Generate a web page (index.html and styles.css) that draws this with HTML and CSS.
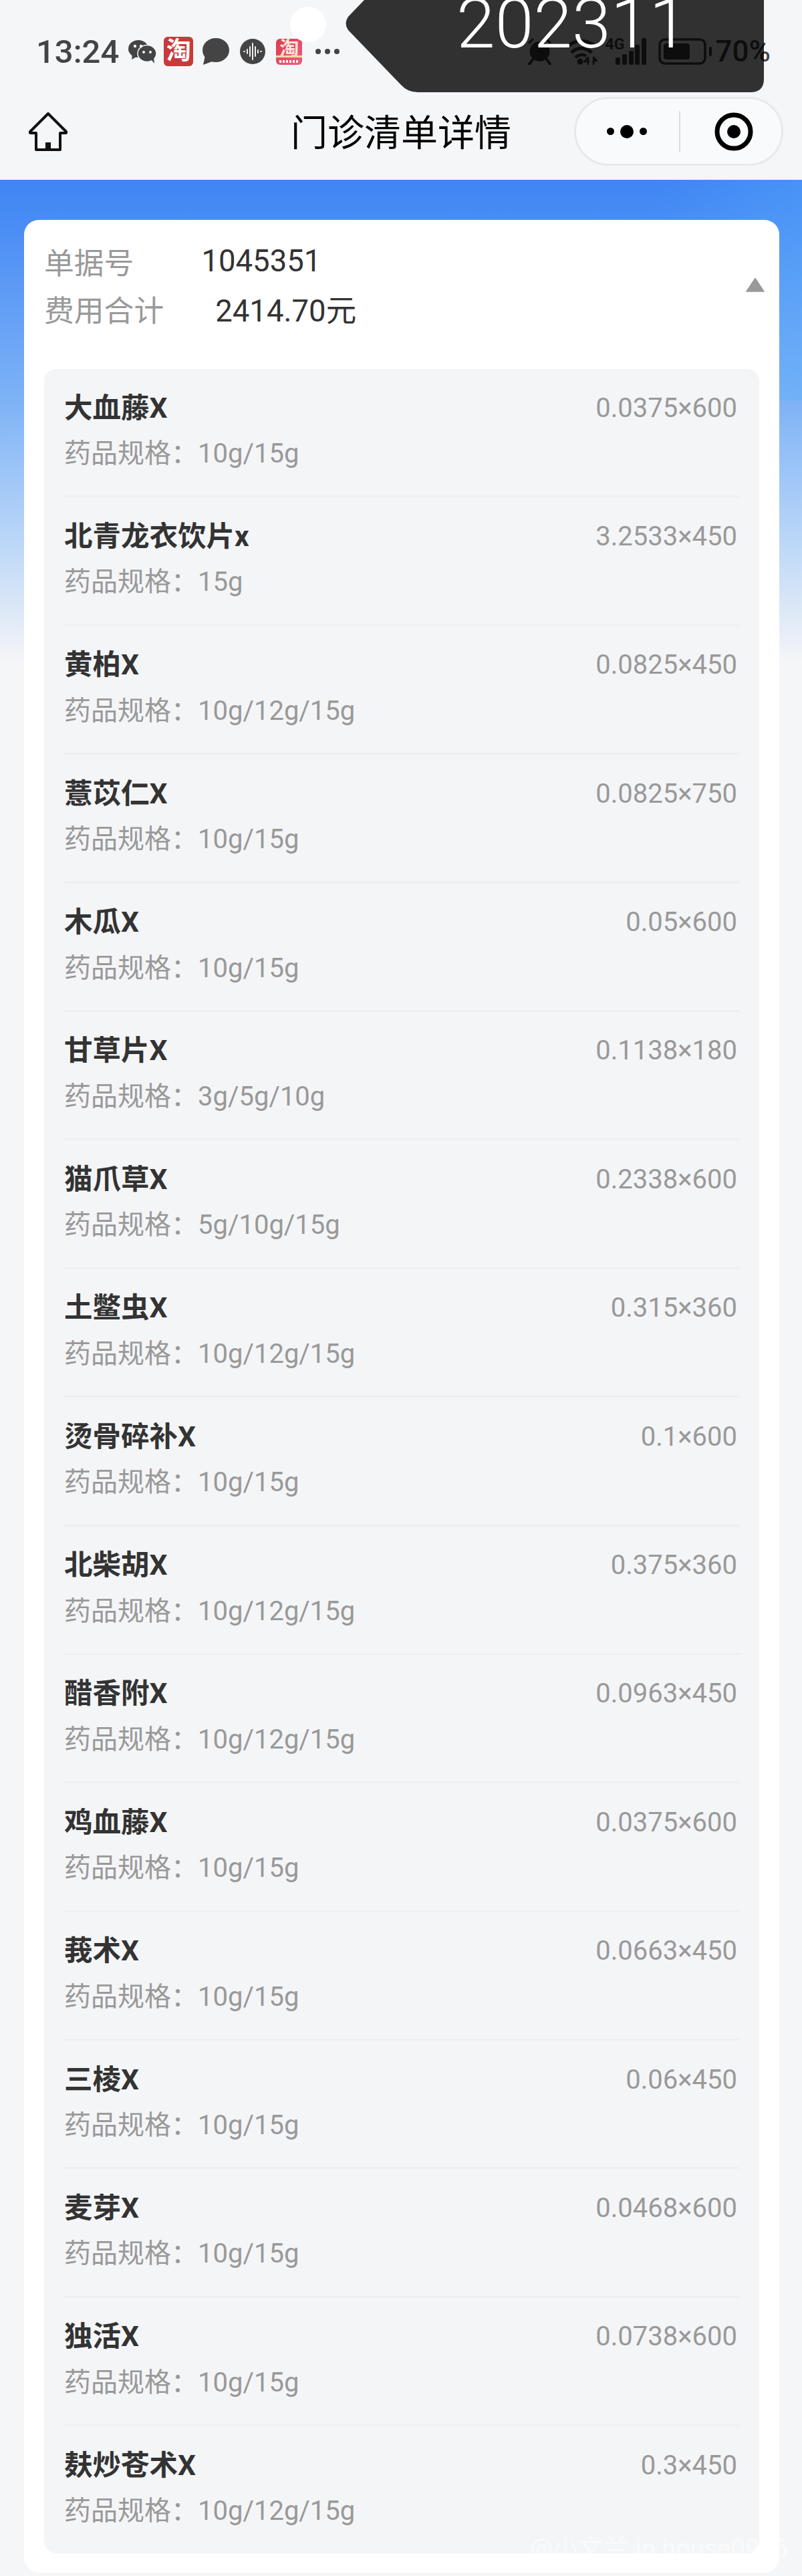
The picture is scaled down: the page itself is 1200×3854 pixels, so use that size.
FILE: index.html
```html
<!DOCTYPE html>
<html>
  <head>
    <meta charset="utf-8">
    <title>门诊清单详情</title>
    <link rel="stylesheet" href="styles.css">
  </head>
  <body>
    <div class="page">
      <div class="status-bar">
        <span class="status-time">13:24</span>
        <svg class="ico-wechat" viewBox="0 0 42 36">
          <ellipse cx="15" cy="14" rx="15" ry="13" fill="#444"/>
          <path d="M6 22 L5 30 L14 25 Z" fill="#444"/>
          <ellipse cx="28" cy="21" rx="14" ry="12.500" fill="#444" stroke="#f5f6f8" stroke-width="1.500"/>
          <path d="M34 30 L39 36 L38 27 Z" fill="#444"/>
          <circle cx="10" cy="10" r="2.200" fill="#f5f6f8"/>
          <circle cx="19" cy="10" r="2.200" fill="#f5f6f8"/>
          <circle cx="23" cy="19" r="2" fill="#f5f6f8"/>
          <circle cx="33" cy="19" r="2" fill="#f5f6f8"/>
        </svg>
        <span class="ico-taobao">淘</span>
        <svg class="ico-bubble" viewBox="0 0 41 40">
          <ellipse cx="21" cy="18" rx="20" ry="18" fill="#444"/>
          <path d="M5 26 L2 40 L18 34 Z" fill="#444"/>
        </svg>
        <svg class="ico-audio" viewBox="0 0 38 38">
          <circle cx="19" cy="19" r="19" fill="#444"/>
          <path d="M6 19h1M11 16v6M15 12v14M19 7v24M23 12v14M27 17v4M31 19h1" stroke="#f0f0f0" stroke-width="2" stroke-linecap="round"/>
        </svg>
        <span class="ico-taobao-sale">
          <span class="sale-char">淘</span>
          <span class="sale-streak"></span>
          <span class="sale-marks"></span>
        </span>
        <span class="status-more"><i></i><i></i><i></i></span>

        <div class="status-right">
          <svg class="ico-alarm" viewBox="0 0 37 40">
            <circle cx="18.500" cy="20" r="15" fill="#444"/>
            <path d="M2 8 L9 1 M35 8 L28 1" stroke="#444" stroke-width="3.500"/>
            <path d="M8 32 L3 39 M29 32 L34 39" stroke="#444" stroke-width="4" stroke-linecap="round"/>
            <path d="M19 11 V21 L25 27" stroke="#333" stroke-width="2.500" fill="none"/>
          </svg>
          <svg class="ico-wifi" viewBox="0 0 48 40">
            <path d="M2 14 C14 1 34 1 46 14" stroke="#444" stroke-width="5" fill="none"/>
            <path d="M9 22 C17 13 31 13 39 22" stroke="#444" stroke-width="5" fill="none"/>
            <path d="M15 29 C20 24 28 24 31 27" stroke="#444" stroke-width="4.500" fill="none"/>
            <circle cx="22" cy="35" r="4.500" fill="#444"/>
            <path d="M34 40 V28 M33 29 L29 35 H36 M42 28 V40 M42 28 L47 34 H42" stroke="#444" stroke-width="2.500" fill="none"/>
          </svg>
          <span class="signal">
            <span class="signal-label">4G</span>
            <svg class="ico-signal" viewBox="0 0 46 40">
              <rect x="0" y="29" width="7" height="11" rx="2" fill="#444"/>
              <rect x="10" y="24" width="7" height="16" rx="2" fill="#444"/>
              <rect x="20" y="19" width="7" height="21" rx="2" fill="#444"/>
              <rect x="29" y="10" width="7" height="30" rx="2" fill="#444"/>
              <rect x="39" y="0" width="7" height="40" rx="2" fill="#444"/>
            </svg>
          </span>
          <svg class="ico-battery" viewBox="0 0 80 40">
            <rect x="2" y="2" width="68" height="36" rx="8" fill="none" stroke="#444" stroke-width="3.500"/>
            <rect x="8" y="8" width="39" height="24" rx="4" fill="#444"/>
            <rect x="76" y="13" width="4" height="14" rx="2" fill="#444"/>
          </svg>
          <span class="status-percent">70%</span>
        </div>
      </div>

      <div class="nav-bar">
        <svg class="ico-home" viewBox="0 0 58 58">
          <path d="M29 2 L2 29 Q1 31 3 31 H11 V56 H47 V31 H55 Q57 31 56 29 Z" fill="none" stroke="#111" stroke-width="4" stroke-linejoin="round"/>
          <rect x="25" y="45" width="8" height="11" fill="#111"/>
        </svg>
        <div class="nav-title">门诊清单详情</div>
        <div class="capsule">
          <div class="capsule-more"><i></i><b></b><i></i></div>
          <div class="capsule-line"></div>
          <svg class="ico-target" viewBox="0 0 58 58">
            <circle cx="29" cy="29" r="25" fill="none" stroke="#000" stroke-width="7"/>
            <circle cx="29" cy="29" r="10" fill="#000"/>
          </svg>
        </div>
      </div>

      <div class="content">
        <div class="card">
          <div class="summary">
            <div class="summary-text">
              <div class="summary-row"><span class="summary-label label-no">单据号</span><span class="summary-value">1045351</span></div>
              <div class="summary-row"><span class="summary-label label-total">费用合计</span><span class="summary-value">2414.70元</span></div>
            </div>
            <svg class="ico-arrow" viewBox="0 0 28 22">
              <path d="M14 1.500 L27 21 H1 Z" fill="#999" stroke="#999" stroke-width="1.500" stroke-linejoin="round"/>
            </svg>
          </div>

          <div class="drug-list">
            <div class="drug"><div class="drug-top"><span class="drug-name">大血藤X</span><span class="drug-price">0.0375×600</span></div><div class="drug-spec">药品规格：10g/15g</div></div>
            <div class="drug"><div class="drug-top"><span class="drug-name">北青龙衣饮片x</span><span class="drug-price">3.2533×450</span></div><div class="drug-spec">药品规格：15g</div></div>
            <div class="drug"><div class="drug-top"><span class="drug-name">黄柏X</span><span class="drug-price">0.0825×450</span></div><div class="drug-spec">药品规格：10g/12g/15g</div></div>
            <div class="drug"><div class="drug-top"><span class="drug-name">薏苡仁X</span><span class="drug-price">0.0825×750</span></div><div class="drug-spec">药品规格：10g/15g</div></div>
            <div class="drug"><div class="drug-top"><span class="drug-name">木瓜X</span><span class="drug-price">0.05×600</span></div><div class="drug-spec">药品规格：10g/15g</div></div>
            <div class="drug"><div class="drug-top"><span class="drug-name">甘草片X</span><span class="drug-price">0.1138×180</span></div><div class="drug-spec">药品规格：3g/5g/10g</div></div>
            <div class="drug"><div class="drug-top"><span class="drug-name">猫爪草X</span><span class="drug-price">0.2338×600</span></div><div class="drug-spec">药品规格：5g/10g/15g</div></div>
            <div class="drug"><div class="drug-top"><span class="drug-name">土鳖虫X</span><span class="drug-price">0.315×360</span></div><div class="drug-spec">药品规格：10g/12g/15g</div></div>
            <div class="drug"><div class="drug-top"><span class="drug-name">烫骨碎补X</span><span class="drug-price">0.1×600</span></div><div class="drug-spec">药品规格：10g/15g</div></div>
            <div class="drug"><div class="drug-top"><span class="drug-name">北柴胡X</span><span class="drug-price">0.375×360</span></div><div class="drug-spec">药品规格：10g/12g/15g</div></div>
            <div class="drug"><div class="drug-top"><span class="drug-name">醋香附X</span><span class="drug-price">0.0963×450</span></div><div class="drug-spec">药品规格：10g/12g/15g</div></div>
            <div class="drug"><div class="drug-top"><span class="drug-name">鸡血藤X</span><span class="drug-price">0.0375×600</span></div><div class="drug-spec">药品规格：10g/15g</div></div>
            <div class="drug"><div class="drug-top"><span class="drug-name">莪术X</span><span class="drug-price">0.0663×450</span></div><div class="drug-spec">药品规格：10g/15g</div></div>
            <div class="drug"><div class="drug-top"><span class="drug-name">三棱X</span><span class="drug-price">0.06×450</span></div><div class="drug-spec">药品规格：10g/15g</div></div>
            <div class="drug"><div class="drug-top"><span class="drug-name">麦芽X</span><span class="drug-price">0.0468×600</span></div><div class="drug-spec">药品规格：10g/15g</div></div>
            <div class="drug"><div class="drug-top"><span class="drug-name">独活X</span><span class="drug-price">0.0738×600</span></div><div class="drug-spec">药品规格：10g/15g</div></div>
            <div class="drug"><div class="drug-top"><span class="drug-name">麸炒苍术X</span><span class="drug-price">0.3×450</span></div><div class="drug-spec">药品规格：10g/12g/15g</div></div>
          </div>
        </div>
      </div>

      <!-- things pasted on top of the screenshot -->
      <div class="sticker-dot"></div>
      <svg class="sticker-tag" viewBox="0 0 626 138">
        <path d="M28 0 L4 25 Q-3 35 4 45 L83 127 Q93 138 108 138 H606 Q626 138 626 118 V0 Z" fill="rgba(0,0,0,.8)"/>
      </svg>
      <div class="sticker-number">202311</div>
      <div class="watermark">@小文兰 in house0906</div>
    </div>
  </body>
</html>
```

FILE: styles.css
```css
* {
  box-sizing: border-box;
}
body {
  margin: 0;
  background: #f5f6f8;
  font-family: Roboto, "Noto Sans CJK SC", sans-serif;
}
.page {
  position: relative;
  width: 1200px;
  height: 3854px;
  overflow: hidden;
}

/* status bar */
.status-bar {
  display: flex;
  align-items: center;
  height: 120px;
  padding: 34px 47px 0 54px;
  color: #444;
}
.status-time {
  margin-right: 14px;
  font-size: 49px;
  font-weight: 500;
}
.ico-wechat {
  width: 42px;
  height: 36px;
  margin-right: 11px;
}
.ico-taobao {
  width: 44px;
  height: 44px;
  margin-right: 13px;
  border-radius: 6px;
  background: #c93a3a;
  color: #fff;
  font-size: 37px;
  font-weight: 700;
  line-height: 44px;
  text-align: center;
}
.ico-bubble {
  width: 41px;
  height: 40px;
  margin-right: 16px;
}
.ico-audio {
  width: 38px;
  height: 38px;
  margin-right: 16px;
}
.ico-taobao-sale {
  position: relative;
  width: 39px;
  height: 39px;
  margin-right: 20px;
  border-radius: 6px;
  background: linear-gradient(135deg, #dc3a4e, #ef5f7e);
  overflow: hidden;
}
.sale-char {
  display: block;
  color: #fde6dc;
  font-size: 29px;
  font-weight: 700;
  line-height: 31px;
  text-align: center;
}
.sale-streak {
  position: absolute;
  left: 0;
  right: 0;
  top: 25px;
  height: 3px;
  background: #f6d9a5;
}
.sale-marks {
  position: absolute;
  left: 5px;
  right: 5px;
  top: 32px;
  height: 4px;
  background: repeating-linear-gradient(90deg, #fff 0 3px, #e8506c 3px 5px);
}
.status-more {
  display: flex;
  gap: 6px;
}
.status-more i {
  width: 8px;
  height: 8px;
  border-radius: 50%;
  background: #444;
}
.status-right {
  display: flex;
  align-items: center;
  margin-left: auto;
}
.ico-alarm {
  width: 37px;
  height: 40px;
  margin-right: 20px;
}
.ico-wifi {
  width: 48px;
  height: 40px;
  margin-right: 12px;
}
.signal {
  position: relative;
  width: 61px;
  height: 40px;
  margin-right: 18px;
}
.signal-label {
  position: absolute;
  left: 0;
  top: -3px;
  font-size: 23px;
  font-weight: 700;
  line-height: 26px;
  color: #444;
}
.ico-signal {
  position: absolute;
  right: 0;
  top: 0;
  width: 46px;
  height: 40px;
}
.ico-battery {
  width: 80px;
  height: 40px;
  margin-right: 6px;
}
.status-percent {
  font-size: 44px;
  font-weight: 500;
}

/* nav */
.nav-bar {
  display: grid;
  grid-template-columns: 1fr auto 1fr;
  align-items: center;
  height: 149px;
  padding: 4px 28px 0 43px;
}
.ico-home {
  width: 58px;
  height: 58px;
}
.nav-title {
  margin: 5px 15px 0 0;
  color: #000;
  font-size: 55px;
  line-height: 70px;
}
.capsule {
  display: flex;
  align-items: center;
  justify-self: end;
  width: 313px;
  height: 103px;
  border: 3px solid #e8e9eb;
  border-radius: 52px;
  background: #f9fafb;
}
.capsule-more {
  display: flex;
  align-items: center;
  gap: 9px;
  width: 154px;
  padding-left: 46px;
}
.capsule-more i {
  width: 11px;
  height: 11px;
  border-radius: 50%;
  background: #000;
}
.capsule-more b {
  width: 20px;
  height: 20px;
  border-radius: 50%;
  background: #000;
}
.capsule-line {
  width: 2px;
  height: 62px;
  background: #dcdde0;
}
.ico-target {
  width: 58px;
  height: 58px;
  margin-left: 51px;
}

/* content */
.content {
  height: 3585px;
  padding: 60px 34px 0 36px;
  background:
    linear-gradient(100deg, rgba(90, 175, 250, 0) 78%, rgba(90, 175, 250, .4) 100%) 0 0 / 100% 330px no-repeat,
    linear-gradient(180deg, #3f85f4 0, #4a8df5 70px, #80b4f6 340px, #b8d5f8 530px, #e8eef7 680px, #f5f6f8 720px) 0 0 / 100% 720px no-repeat;
}
.card {
  height: 3520px;
  padding: 0 30px;
  border-radius: 22px;
  background: #fff;
}
.summary {
  display: flex;
  align-items: center;
  justify-content: space-between;
  height: 223px;
  padding: 28px 0 58px;
}
.summary-row {
  display: flex;
  align-items: center;
  height: 71px;
}
.summary-label {
  color: #999;
  font-size: 44.800px;
}
.label-no {
  margin-right: 101px;
}
.label-total {
  margin-right: 77px;
}
.summary-value {
  color: #333;
  font-size: 45.500px;
}
.ico-arrow {
  width: 28px;
  height: 22px;
  margin-right: -8px;
}

/* list */
.drug-list {
  border-radius: 18px;
  background: #f4f5f7;
  padding: 0 30px;
}
.drug {
  height: 192.400px;
  padding-top: 30px;
  border-bottom: 3px solid #eeeff2;
}
.drug:last-child {
  height: 189.400px;
  border-bottom: none;
}
.drug-top {
  display: flex;
  justify-content: space-between;
  align-items: center;
  height: 48px;
  padding-right: 3px;
}
.drug-name {
  color: #333;
  font-size: 42.500px;
  font-weight: 700;
}
.drug-price {
  position: relative;
  top: 4px;
  color: #999;
  font-size: 40px;
}
.drug-spec {
  margin-top: 25px;
  color: #999;
  font-size: 40px;
  line-height: 48px;
}

/* stickers over the screenshot */
.sticker-dot {
  position: absolute;
  left: 434px;
  top: 10px;
  width: 54px;
  height: 53px;
  border-radius: 50%;
  background: #fff;
}
.sticker-tag {
  position: absolute;
  left: 517px;
  top: 0;
  width: 626px;
  height: 138px;
}
.sticker-number {
  position: absolute;
  left: 683px;
  top: -23px;
  color: #fff;
  font-size: 104px;
  font-weight: 300;
  line-height: 118px;
}
.watermark {
  position: absolute;
  left: 793px;
  top: 3790px;
  color: rgba(255, 255, 255, .6);
  font-size: 38px;
  line-height: 46px;
  white-space: nowrap;
}
```
